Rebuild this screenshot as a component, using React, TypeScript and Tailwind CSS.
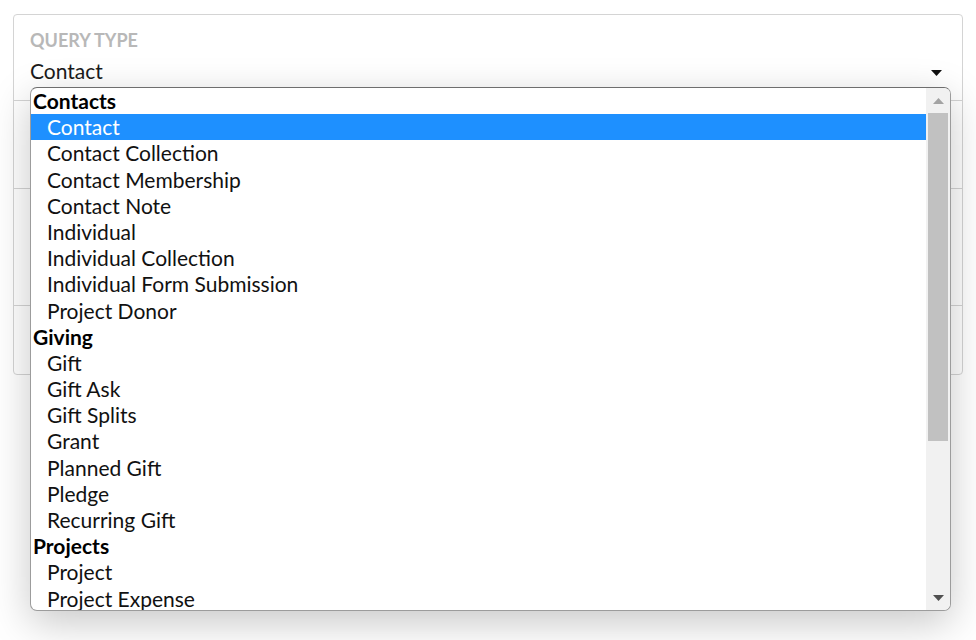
import {ReactNode} from "react";

type Row = {label: string; group?: boolean; selected?: boolean};

const rows: Row[] = [
    {label: "Contacts", group: true},
    {label: "Contact", selected: true},
    {label: "Contact Collection"},
    {label: "Contact Membership"},
    {label: "Contact Note"},
    {label: "Individual"},
    {label: "Individual Collection"},
    {label: "Individual Form Submission"},
    {label: "Project Donor"},
    {label: "Giving", group: true},
    {label: "Gift"},
    {label: "Gift Ask"},
    {label: "Gift Splits"},
    {label: "Grant"},
    {label: "Planned Gift"},
    {label: "Pledge"},
    {label: "Recurring Gift"},
    {label: "Projects", group: true},
    {label: "Project"},
    {label: "Project Expense"}
];

const Section = ({children, className}: {children?: ReactNode; className: string}) => (
    <div className={`border-t border-[#d4d4d4] ${className}`}>{children}</div>
);

const Scrollbar = () => (
    <div className="w-[24px] shrink-0 bg-[#f1f1f1] flex flex-col items-center">
        <div className="h-[25px] w-full flex items-center justify-center">
            <svg width="11" height="6" viewBox="0 0 11 6">
                <path d="M5.5 0 L11 6 L0 6 Z" fill="#a3a3a3" />
            </svg>
        </div>
        <div className="w-[20px] h-[328px] bg-[#c1c1c1]" />
        <div className="flex-1" />
        <div className="h-[24px] w-full flex items-center justify-center">
            <svg width="11" height="6" viewBox="0 0 11 6">
                <path d="M0 0 L11 0 L5.5 6 Z" fill="#505050" />
            </svg>
        </div>
    </div>
);

const App = () => {
    return (
        <div
            className="relative w-[976px] h-[640px] bg-white overflow-hidden pt-[14px] px-[13px]"
            style={{fontFamily: "Lato, 'Open Sans', sans-serif"}}
        >
            {/* 카드 */}
            <div className="border border-[#d4d4d4] rounded-[4px] bg-white">
                <div className="h-[85px] px-4 pt-[14px]">
                    <div className="text-[18px] font-bold uppercase text-[#b8b8b8] leading-[22px]">Query Type</div>
                    <div className="flex items-center justify-between mt-[4px] pr-[4px]">
                        <span className="text-[21px] leading-[32px] text-[#1a1a1a]">Contact</span>
                        <svg width="11" height="6" viewBox="0 0 11 6" className="mt-[4px]">
                            <path d="M0 0 L11 0 L5.5 6 Z" fill="#111" />
                        </svg>
                    </div>
                </div>
                <Section className="h-[88px]" />
                <Section className="h-[117px]" />
                <Section className="h-[69px]" />
            </div>

            {/* 드롭다운 목록 */}
            <div className="absolute left-[30px] top-[87px] w-[921px] h-[524px] rounded-[7px] border border-[#9c9c9c] border-t-[#6e6e6e] bg-white overflow-hidden flex shadow-[0_12px_40px_rgba(0,0,0,0.22)]">
                <div className="flex-1 min-w-0 overflow-hidden">
                    {rows.map((row) => (
                        <div
                            key={row.label}
                            className={
                                row.group
                                    ? "h-[26.2px] leading-[26.2px] pl-[2px] text-[21px] font-bold text-black"
                                    : row.selected
                                      ? "h-[26.2px] leading-[26.2px] pl-[16px] text-[21px] bg-[#1e90ff] text-white"
                                      : "h-[26.2px] leading-[26.2px] pl-[16px] text-[21px] text-[#111]"
                            }
                        >
                            {row.label}
                        </div>
                    ))}
                </div>
                <Scrollbar />
            </div>
        </div>
    );
};

export default App;
